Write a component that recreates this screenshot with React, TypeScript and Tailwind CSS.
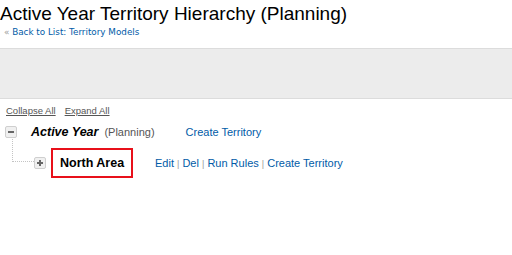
export default function App() {
  return (
    <div className="h-[255px] w-[512px] overflow-hidden bg-white font-['Liberation_Sans',Arial,sans-serif]">
      <div className="pt-[2px]">
        <h1 className="text-[19px] leading-[23px] font-normal text-black">
          Active Year Territory Hierarchy (Planning)
        </h1>
        <div className="mt-[1px] pl-[4px] font-['DejaVu_Sans',Verdana,sans-serif] text-[8.8px] leading-[12px]">
          <span className="text-[#999]">«</span>{' '}
          <a className="text-[#015ba7]">Back to List: Territory Models</a>
        </div>
      </div>

      <div className="mt-[10px] h-[51px] border-y border-[#dcdcdc] bg-[#ececec]" />

      <div className="pl-[6px] pt-[6px] text-[9.5px] leading-[12px] text-[#555]">
        <span className="underline">Collapse All</span>
        <span className="ml-[9px] underline">Expand All</span>
      </div>

      <div className="relative mt-[8px] pl-[5px]">
        <div className="flex h-[14px] items-center">
          <span className="flex h-[12px] w-[12px] items-center justify-center rounded-[2px] border border-[#cfcfcf] bg-[#f0f0f0]">
            <span className="h-[2px] w-[6px] bg-[#666]" />
          </span>
          <span className="ml-[14px] text-[12.5px] font-bold italic text-black">Active Year</span>
          <span className="ml-[6px] text-[11px] text-[#555]">(Planning)</span>
          <a className="ml-[31px] text-[11px] text-[#015ba7]">Create Territory</a>
        </div>

        <div className="absolute left-[12px] top-[14px] h-[23px] w-[22px] border-b border-l border-dotted border-[#c4c4c4]" />

        <div className="ml-[29px] mt-[9px] flex items-center">
          <span className="relative flex h-[12px] w-[12px] items-center justify-center rounded-[2px] border border-[#cfcfcf] bg-[#f0f0f0]">
            <span className="absolute h-[2px] w-[6px] bg-[#666]" />
            <span className="absolute h-[6px] w-[2px] bg-[#666]" />
          </span>
          <span className="ml-[5px] flex h-[30px] w-[82px] items-center border-2 border-[#e8101a] pl-[7px] text-[12.5px] font-bold text-black">
            North Area
          </span>
          <span className="ml-[22px] text-[11px] text-[#015ba7]">
            Edit <span className="text-[9px] text-[#999]">|</span> Del{' '}
            <span className="text-[9px] text-[#999]">|</span> Run Rules{' '}
            <span className="text-[9px] text-[#999]">|</span> Create Territory
          </span>
        </div>
      </div>
    </div>
  )
}
